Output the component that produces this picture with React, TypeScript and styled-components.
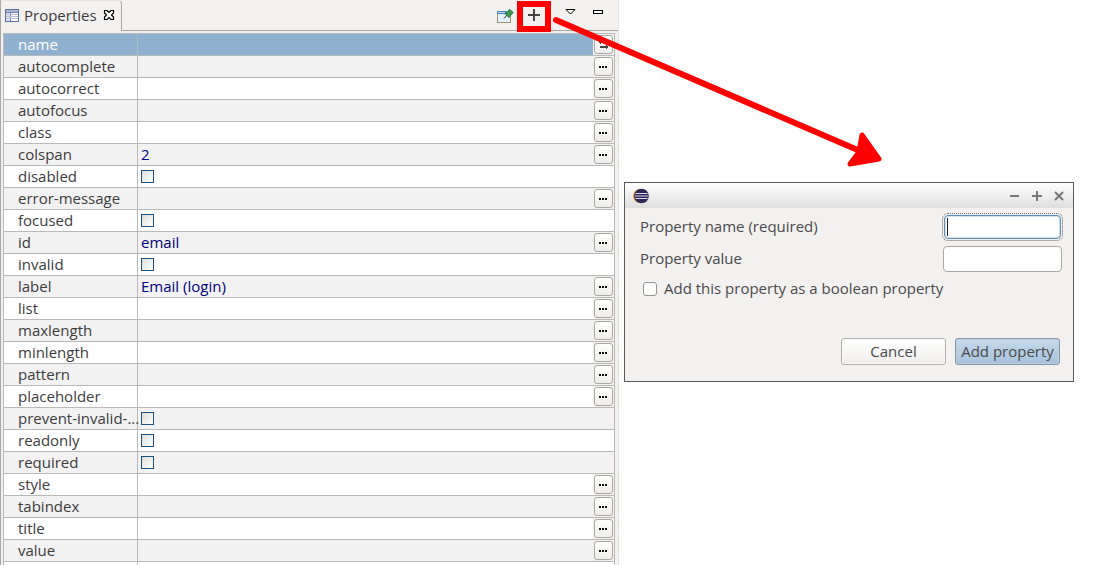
import React from "react";
import styled, { createGlobalStyle, css } from "styled-components";

const GlobalStyle = createGlobalStyle`
  * { box-sizing: border-box; }
  body {
    margin: 0;
    background: #fff;
    color: #3c3c3c;
    font-family: "Open Sans", "Noto Sans", sans-serif;
    font-size: 15px;
    line-height: 18px;
  }
  button, input { font: inherit; color: inherit; margin: 0; padding: 0; }
`;

const Page = styled.main`
  position: relative;
  display: flex;
  align-items: flex-start;
  height: 100vh;
  overflow: hidden;
`;

const Panel = styled.section`
  flex: 1;
  min-width: 0;
  height: 100%;
  overflow: hidden;
  background: #f2f1f0;
  border-left: 1px solid #aaa6a1;
  border-right: 1px solid #e4e2e0;
`;

const PanelHeader = styled.header`
  display: flex;
  height: 31px;
  margin-bottom: 2px;
`;

const Tab = styled.div`
  display: flex;
  align-items: center;
  gap: 5px;
  width: 121px;
  padding: 0 0 2px 4px;
  border-top: 1px solid #e4e2e0;
  border-right: 1px solid #aaa6a1;
  border-radius: 4px 4px 0 0;
`;

const TabTitle = styled.h1`
  margin: 0;
  font-size: 15px;
  font-weight: 400;
  line-height: 18px;
`;

const IconButton = styled.button`
  display: flex;
  align-items: center;
  justify-content: center;
  border: 0;
  background: none;
`;

const CloseButton = styled(IconButton)`
  width: 12px;
  height: 12px;
  margin-left: 1px;
`;

const Toolbar = styled.div`
  display: flex;
  flex: 1;
  justify-content: flex-end;
  padding: 1px 7px 0 0;
  border-bottom: 1px solid #aaa6a1;
`;

const ToolButton = styled(IconButton)`
  width: 27px;
  height: 22px;
`;

const PinButton = styled(IconButton)`
  width: 24px;
  height: 30px;
`;

const AddButton = styled(IconButton)`
  width: 34px;
  height: 31px;
  margin-right: 6px;
  padding-bottom: 3px;
  border: 6px solid #f00;
`;

const Table = styled.table`
  width: calc(100% - 5px);
  margin-left: 2px;
  table-layout: fixed;
  border-collapse: separate;
  border-spacing: 0;
  border: 1px solid #b9b9b9;
`;

const Row = styled.tr<{ $selected?: boolean }>`
  background: #fff;
  &:nth-child(even) { background: #f2f2f2; }
  ${(p) => p.$selected && css`
    background: #8fb1cf;
    color: #fff;
  `}
`;

const cell = css`
  height: 22px;
  padding: 0;
  border-bottom: 1px solid #b9b9b9;
`;

const NameCell = styled.th`
  ${cell}
  padding: 0 0 2px 14px;
  border-right: 1px solid #b9b9b9;
  font-weight: 400;
  text-align: left;
  white-space: nowrap;
`;

const ValueCell = styled.td`
  ${cell}
  padding: 0 0 2px 3px;
  color: #000080;
`;

const ActionCell = styled.td<{ $filled: boolean }>`
  ${cell}
  background: ${(p) => (p.$filled ? "#f2f1f0" : "transparent")};
`;

const NameColumn = styled.col`
  width: 134px;
`;

const ActionColumn = styled.col`
  width: 21px;
`;

const CellButton = styled(IconButton)`
  width: 19px;
  height: 19px;
  margin-left: 1px;
  border: 1px solid #aaa7a4;
  border-radius: 3px;
  background: linear-gradient(#fff, #ededec);
`;

const CellCheckbox = styled.input`
  && {
    display: block;
    width: 13px;
    height: 13px;
    margin-top: 2px;
    appearance: none;
    border: 1px solid #1c5180;
    background: linear-gradient(135deg, #dcdcd7, #fff);
  }
`;

const Dialog = styled.section`
  flex: 0 0 450px;
  margin: 182px 20px 0 5px;
  border: 1px solid #5a5a5a;
  background: #f2f1f0;
`;

const TitleBar = styled.header`
  display: flex;
  align-items: center;
  justify-content: space-between;
  height: 25px;
  padding: 0 7px;
  background: linear-gradient(#fff, #dedede);
`;

const WindowButtons = styled.div`
  display: flex;
  gap: 8px;
`;

const WindowButton = styled(IconButton)`
  width: 14px;
  height: 14px;
`;

const Form = styled.form`
  padding: 6px 11px 16px 15px;
  color: #4a4a4a;
`;

const Field = styled.div`
  display: flex;
  align-items: center;
  justify-content: space-between;
  height: 26px;
  margin-bottom: 6px;
`;

const FieldLabel = styled.label`
  padding-bottom: 2px;
`;

const TextInput = styled.input<{ $active?: boolean }>`
  width: 119px;
  height: 26px;
  padding: 0 4px;
  border: 1px solid #aaa7a4;
  border-radius: 4px;
  background: #fff;
  outline: none;
  ${(p) => p.$active && css`
    && {
      width: 117px;
      height: 24px;
      margin: 1px;
      border-color: #5f8fb8;
      outline: 1px dotted #6a6a6a;
      outline-offset: 1px;
      background: linear-gradient(#222, #222) 2px 2px / 1px 18px no-repeat #fff;
      box-shadow: inset 0 0 0 1px #d3e1ee;
    }
  `}
`;

const CheckField = styled.div`
  display: flex;
  align-items: center;
  gap: 7px;
  height: 22px;
  padding-left: 3px;
`;

const CheckInput = styled.input`
  width: 14px;
  height: 14px;
  appearance: none;
  border: 1px solid #979492;
  border-radius: 3px;
  background: #fff;
`;

const Actions = styled.div`
  display: flex;
  justify-content: flex-end;
  gap: 9px;
  margin: 38px 2px 0 0;
`;

const ActionButton = styled.button<{ $primary?: boolean }>`
  && {
    width: 105px;
    height: 27px;
    padding-bottom: 2px;
    border: 1px solid ${(p) => (p.$primary ? "#8796a4" : "#b2afac")};
    border-radius: 3px;
    background: ${(p) => (p.$primary ? "linear-gradient(#c6d9e9, #a6c2dc)" : "linear-gradient(#fff, #eeedec)")};
    box-shadow: inset 0 0 0 1px ${(p) => (p.$primary ? "#b9cfe2" : "#f8f8f7")};
  }
`;

const Arrow = styled.svg`
  position: absolute;
  top: 0;
  right: 194px;
  pointer-events: none;
`;

const TableIcon = () => (
  <svg width="14" height="13" viewBox="0 0 14 13">
    <rect x=".5" y=".5" width="13" height="12" fill="#fff" stroke="#5f6f96" />
    <rect x="1" y="1" width="12" height="2" fill="#a9b8d8" />
    <rect x="1" y="3" width="4" height="9" fill="#dbe3f2" />
    <path d="M1 3.5h12M5.5 3v9" stroke="#7485ad" />
    <path d="M1 5.5h12M1 7.5h12M1 9.5h12" stroke="#b8c1d6" />
  </svg>
);

const CloseIcon = () => (
  <svg width="12" height="12" viewBox="0 0 12 12">
    <path d="M1.500 1.500h2.500L6 3.500l2-2h2.500V4l-2 2 2 2v2.500H8l-2-2-2 2H1.500V8l2-2-2-2z" fill="#fff" stroke="#000" strokeWidth="1.200" />
  </svg>
);

const PinIcon = () => (
  <svg width="18" height="16" viewBox="0 0 18 16">
    <rect x="1.500" y="3.500" width="13" height="11" fill="#e4f0fa" stroke="#9c9572" />
    <path d="M1 3h10v3H1z" fill="#4a86c0" />
    <path d="M2 4.500h7" stroke="#bcd7ee" />
    <path d="M8 10.500 11 7" stroke="#333" />
    <path d="m9 5.500 2.500-1L13 2l1-.5 3 3-.5 1L14 7.500l-1 2z" fill="#3f9a50" stroke="#1f7035" />
  </svg>
);

const DotsIcon = () => (
  <svg width="9" height="2" viewBox="0 0 9 2" fill="#111">
    <path d="M0 0h2v2H0zM3 0h2v2H3zM6 0h2v2H6z" />
  </svg>
);

const SwapIcon = () => (
  <svg width="11" height="11" viewBox="0 0 11 11" fill="none" stroke="#444" strokeWidth="2">
    <path d="M1 3h8M2 8h8" />
    <path d="M3 1 1 3l2 2M8 6l2 2-2 2" strokeWidth="1" />
  </svg>
);

const EclipseIcon = () => (
  <svg width="18" height="16" viewBox="0 0 18 16">
    <circle cx="8" cy="8" r="7" fill="#f0932b" />
    <circle cx="9.500" cy="8" r="7.300" fill="#2f2757" />
    <path d="M3.500 5.500h12M3 8h13M3.500 10.500h12" stroke="#d9d6ea" strokeWidth="1.200" />
  </svg>
);

type Property = { name: string; kind?: "check" | "plain"; value?: string };

const properties: Property[] = [
  { name: "name" },
  { name: "autocomplete" },
  { name: "autocorrect" },
  { name: "autofocus" },
  { name: "class" },
  { name: "colspan", value: "2" },
  { name: "disabled", kind: "check" },
  { name: "error-message" },
  { name: "focused", kind: "check" },
  { name: "id", value: "email" },
  { name: "invalid", kind: "check" },
  { name: "label", value: "Email (login)" },
  { name: "list" },
  { name: "maxlength" },
  { name: "minlength" },
  { name: "pattern" },
  { name: "placeholder" },
  { name: "prevent-invalid-...", kind: "check" },
  { name: "readonly", kind: "check" },
  { name: "required", kind: "check" },
  { name: "style" },
  { name: "tabindex" },
  { name: "title" },
  { name: "value" },
  { name: "", kind: "plain" },
];

export default function App() {
  return (
    <Page>
      <GlobalStyle />
      <Panel>
        <PanelHeader>
          <Tab>
            <TableIcon />
            <TabTitle>Properties</TabTitle>
            <CloseButton aria-label="Close"><CloseIcon /></CloseButton>
          </Tab>
          <Toolbar>
            <PinButton aria-label="Pin"><PinIcon /></PinButton>
            <AddButton aria-label="Add">
              <svg width="12" height="12" viewBox="0 0 12 12"><path d="M6 0v12M0 6h12" stroke="#444" strokeWidth="2" /></svg>
            </AddButton>
            <ToolButton aria-label="View menu">
              <svg width="11" height="6" viewBox="0 0 11 6"><path d="M1 .5h9L5.500 5z" fill="#fff" stroke="#000" /></svg>
            </ToolButton>
            <ToolButton aria-label="Minimize">
              <svg width="10" height="4" viewBox="0 0 10 4"><rect x=".5" y=".5" width="9" height="3" fill="#fff" stroke="#000" /></svg>
            </ToolButton>
          </Toolbar>
        </PanelHeader>
        <Table>
          <colgroup>
            <NameColumn />
            <col />
            <ActionColumn />
          </colgroup>
          <tbody>
            {properties.map((p, i) => (
              <Row key={p.name} $selected={i === 0}>
                <NameCell scope="row">{p.name}</NameCell>
                <ValueCell>
                  {p.kind === "check" ? <CellCheckbox type="checkbox" aria-label={p.name} /> : p.value}
                </ValueCell>
                <ActionCell $filled={!p.kind}>
                  {!p.kind && (
                    <CellButton aria-label={`Edit ${p.name}`}>{i === 0 ? <SwapIcon /> : <DotsIcon />}</CellButton>
                  )}
                </ActionCell>
              </Row>
            ))}
          </tbody>
        </Table>
      </Panel>
      <Dialog role="dialog" aria-label="Add property">
        <TitleBar>
          <EclipseIcon />
          <WindowButtons>
            <WindowButton aria-label="Minimize">
              <svg width="10" height="10" viewBox="0 0 10 10"><path d="M0 5h9" stroke="#777" strokeWidth="2" /></svg>
            </WindowButton>
            <WindowButton aria-label="Maximize">
              <svg width="10" height="10" viewBox="0 0 10 10"><path d="M0 5h10M5 0v10" stroke="#777" strokeWidth="2" /></svg>
            </WindowButton>
            <WindowButton aria-label="Close">
              <svg width="10" height="10" viewBox="0 0 10 10"><path d="m1 1 8 8M9 1 1 9" stroke="#777" strokeWidth="2" /></svg>
            </WindowButton>
          </WindowButtons>
        </TitleBar>
        <Form>
          <Field>
            <FieldLabel htmlFor="property-name">Property name (required)</FieldLabel>
            <TextInput id="property-name" $active />
          </Field>
          <Field>
            <FieldLabel htmlFor="property-value">Property value</FieldLabel>
            <TextInput id="property-value" />
          </Field>
          <CheckField>
            <CheckInput type="checkbox" id="boolean-property" />
            <FieldLabel htmlFor="boolean-property">Add this property as a boolean property</FieldLabel>
          </CheckField>
          <Actions>
            <ActionButton type="button">Cancel</ActionButton>
            <ActionButton type="button" $primary>Add property</ActionButton>
          </Actions>
        </Form>
      </Dialog>
      <Arrow width="350" height="180" viewBox="550 0 350 180" aria-hidden="true">
        <path d="M556 20 860 151" stroke="#f00" strokeWidth="6" strokeLinecap="round" />
        <path d="M862 135 879 159 850 164 859 152z" fill="#f00" stroke="#f00" strokeWidth="5" strokeLinejoin="round" />
      </Arrow>
    </Page>
  );
}
